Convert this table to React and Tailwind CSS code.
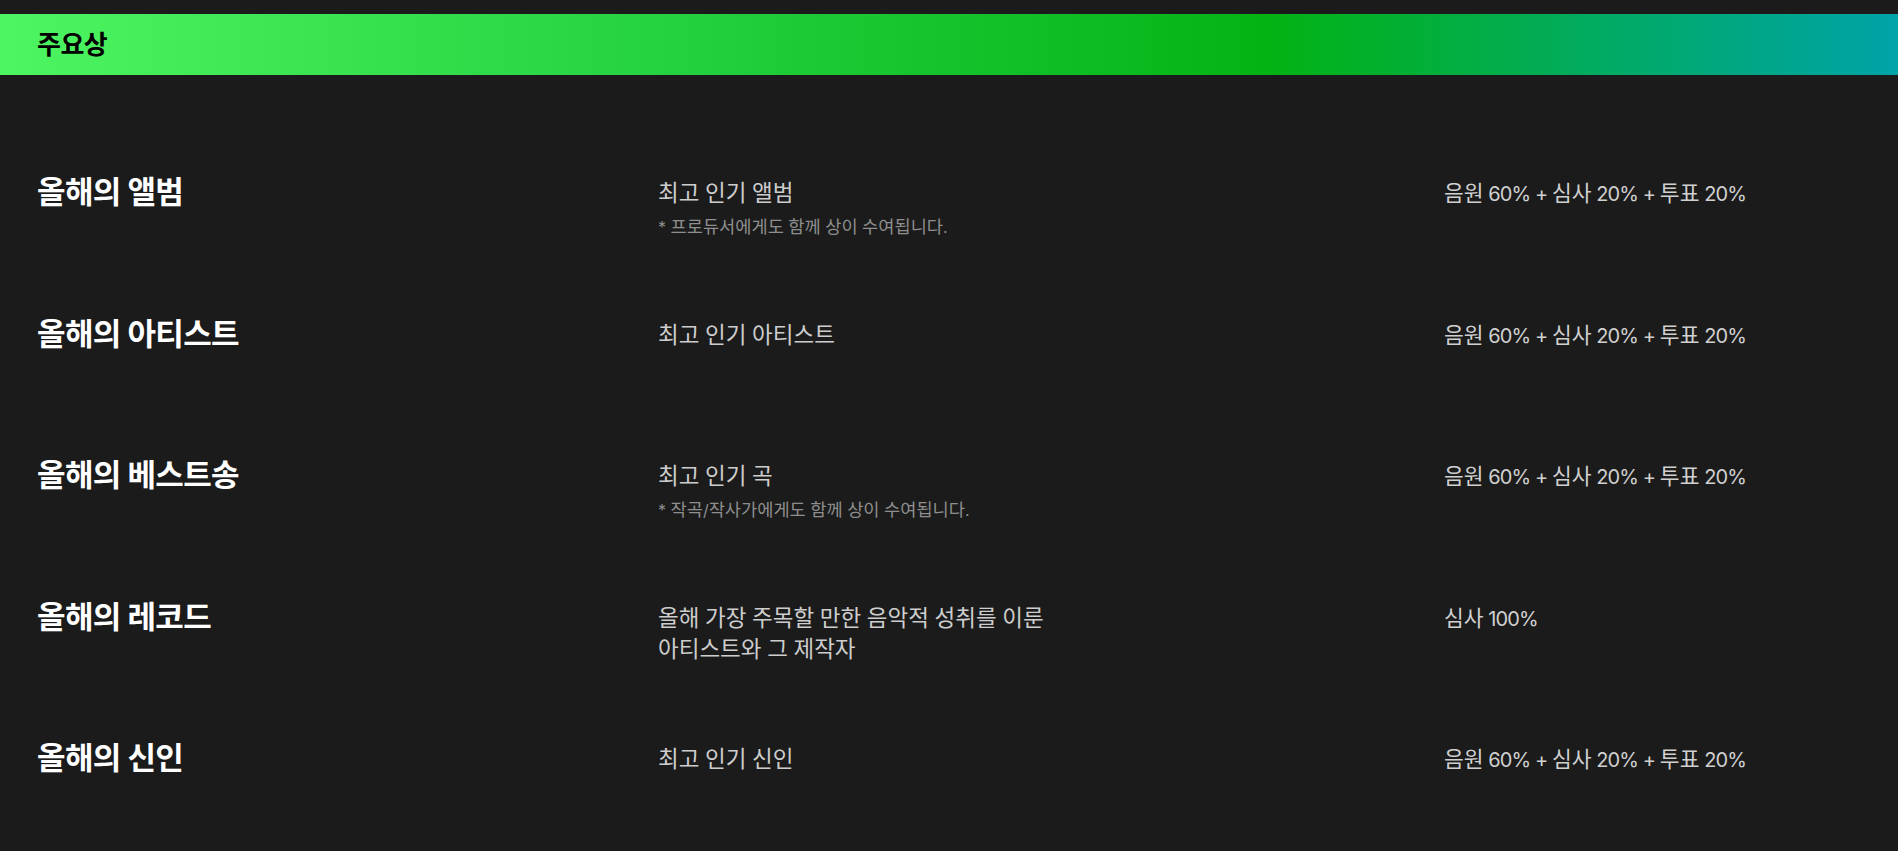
import React from "react";

const rows = [
  { title: "올해의 앨범", desc: ["최고 인기 앨범"], note: "* 프로듀서에게도 함께 상이 수여됩니다.", rule: "음원 60% + 심사 20% + 투표 20%" },
  { title: "올해의 아티스트", desc: ["최고 인기 아티스트"], rule: "음원 60% + 심사 20% + 투표 20%" },
  { title: "올해의 베스트송", desc: ["최고 인기 곡"], note: "* 작곡/작사가에게도 함께 상이 수여됩니다.", rule: "음원 60% + 심사 20% + 투표 20%" },
  { title: "올해의 레코드", desc: ["올해 가장 주목할 만한 음악적 성취를 이룬", "아티스트와 그 제작자"], rule: "심사 100%" },
  { title: "올해의 신인", desc: ["최고 인기 신인"], rule: "음원 60% + 심사 20% + 투표 20%" },
];

const HANGUL = /([\uAC00-\uD7A3]+)/;

const STYLES = {
  desc: { k: "text-[22.5px]", l: "" },
  note: { k: "text-[17.6px]", l: "" },
  rule: { k: "text-[21.5px]", l: "tracking-[-0.045em]" },
};

function Mixed({ text, kind }) {
  const s = STYLES[kind];
  return text
    .split(HANGUL)
    .filter(Boolean)
    .map((p, i) =>
      HANGUL.test(p) ? (
        <span key={i} className={s.k}>
          {p}
        </span>
      ) : (
        <span key={i} className={s.l}>
          {p}
        </span>
      )
    );
}

export default function App() {
  return (
    <div
      className="min-h-[851px] w-full bg-[#1b1b1b] pt-[14px]"
      style={{ fontFamily: 'Inter, "Noto Sans CJK KR", sans-serif' }}
    >
      <div className="flex h-[61px] items-center bg-[linear-gradient(to_right,#4ef562_0%,#22cf3d_37%,#03b314_67%,#00a3a8_100%)] pl-[37px]">
        <span className="text-[26px] font-bold leading-none tracking-[-0.02em] text-black">주요상</span>
      </div>
      <div className="pt-[100px]">
        {rows.map((r) => (
          <div key={r.title} className="grid h-[141.5px] grid-cols-[621px_786px_1fr] items-start pl-[37px]">
            <div className="text-[31px] font-bold leading-[33px] tracking-[-0.02em] text-white">{r.title}</div>
            <div className="pt-[3px]">
              {r.desc.map((d) => (
                <div key={d} className="text-[20px] leading-[30px] text-[#cdcdcd]">
                  <Mixed text={d} kind="desc" />
                </div>
              ))}
              {r.note && (
                <div className="mt-[7px] text-[16px] leading-[22px] text-[#8e8e8e]">
                  <Mixed text={r.note} kind="note" />
                </div>
              )}
            </div>
            <div className="pt-[3px] text-[20px] leading-[30px] text-[#d0d0d0]">
              <Mixed text={r.rule} kind="rule" />
            </div>
          </div>
        ))}
      </div>
    </div>
  );
}
